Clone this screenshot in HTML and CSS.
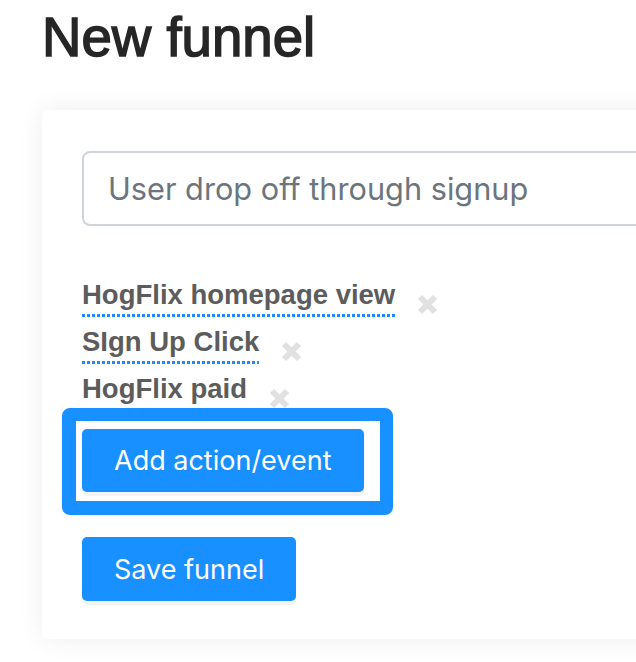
FILE: index.html
```html
<!DOCTYPE html>
<html lang="en">
<head>
<meta charset="utf-8">
<title>New funnel</title>
<link rel="stylesheet" href="styles.css">
</head>
<body>
<div class="page">
  <h1 class="title">New funnel</h1>
  <div class="card">
    <input class="name-input" type="text" value="User drop off through signup">
    <ul class="steps">
      <li class="step"><span class="step-name">HogFlix homepage view</span><svg class="remove" viewBox="0 0 23 23" width="23" height="23"><path d="M4 4L19 19M19 4L4 19"/></svg></li>
      <li class="step"><span class="step-name">SIgn Up Click</span><svg class="remove" viewBox="0 0 23 23" width="23" height="23"><path d="M4 4L19 19M19 4L4 19"/></svg></li>
      <li class="step"><span class="step-name">HogFlix paid</span><svg class="remove" viewBox="0 0 23 23" width="23" height="23"><path d="M4 4L19 19M19 4L4 19"/></svg></li>
    </ul>
    <div class="highlight-wrap">
      <button class="btn" type="button">Add action/event</button>
    </div>
    <div class="save-row">
      <button class="btn btn-save" type="button">Save funnel</button>
    </div>
  </div>
</div>
</body>
</html>
```
FILE: styles.css
```css
html, body {
  margin: 0;
  padding: 0;
  background: #ffffff;
  overflow: hidden;
}

.page {
  width: 636px;
  height: 662px;
  padding-left: 42px;
  box-sizing: border-box;
  overflow: hidden;
}

.title {
  margin: 6px 0 40px 0;
  font-family: "Liberation Sans", Arial, sans-serif;
  font-size: 54.6px;
  line-height: 64px;
  font-weight: 400;
  color: #262626;
  -webkit-text-stroke: 1.5px #262626;
}

.card {
  width: 680px;
  box-sizing: border-box;
  background: #ffffff;
  border-radius: 6px;
  box-shadow: 0 0 26px rgba(0, 0, 0, 0.07);
  padding: 41px 40px 38px 40px;
}

.name-input {
  display: block;
  width: 100%;
  height: 75px;
  box-sizing: border-box;
  border: 2px solid #ced4da;
  border-radius: 8px;
  padding: 0 24px;
  font-family: Inter, "Liberation Sans", sans-serif;
  font-size: 30.7px;
  color: #6c757d;
  background: #ffffff;
  outline: none;
}

.steps {
  list-style: none;
  margin: 45px 0 0 0;
  padding: 0;
}

.step {
  font-family: "Liberation Sans", Arial, sans-serif;
  font-size: 27.5px;
  font-weight: 700;
  line-height: 47px;
  height: 47px;
  color: #5c5c5c;
  white-space: nowrap;
}

.step-name {
  padding-bottom: 7px;
  background-image: linear-gradient(to right, #1a8cff 3px, transparent 3px);
  background-size: 5px 3px;
  background-position: left bottom;
  background-repeat: repeat-x;
}

.remove {
  margin-left: 21px;
  vertical-align: -12px;
  fill: none;
  stroke: #e1e1e1;
  stroke-width: 6;
}

.highlight-wrap {
  position: relative;
  display: inline-block;
  margin-top: 17px;
  vertical-align: top;
}

.highlight-wrap::before {
  content: "";
  position: absolute;
  left: -20px;
  top: -21px;
  width: 331px;
  height: 107px;
  box-sizing: border-box;
  border: 13px solid #1890ff;
  border-left-width: 14px;
  border-bottom-width: 14px;
  border-radius: 8px;
  background: #ffffff;
  z-index: 0;
}

.btn {
  position: relative;
  z-index: 1;
  display: block;
  height: 63px;
  padding: 0 32px;
  border: 0;
  border-radius: 5px;
  background: #1890ff;
  color: #ffffff;
  font-family: Inter, "Liberation Sans", sans-serif;
  font-size: 27px;
  font-weight: 400;
  box-shadow: 0 4px 0 rgba(0, 0, 0, 0.045);
}

.save-row {
  margin-top: 45px;
}

.btn-save {
  height: 64px;
}
```
